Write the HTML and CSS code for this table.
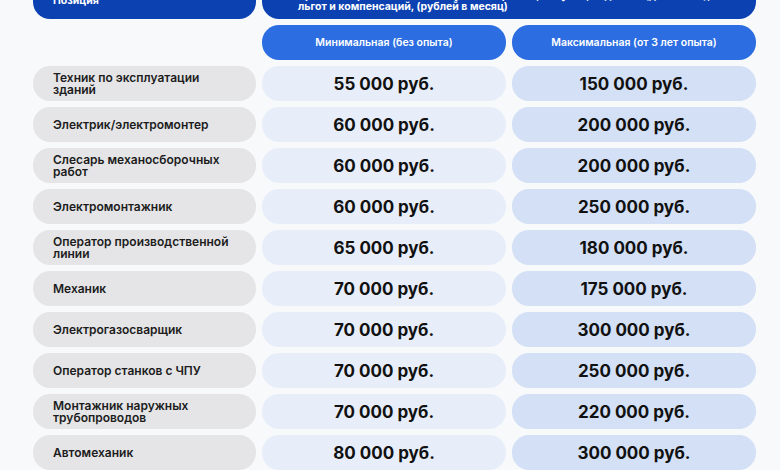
FILE: index.html
```html
<!DOCTYPE html>
<html lang="ru">
<head>
<meta charset="utf-8">
<link rel="stylesheet" href="styles.css">
</head>
<body>
<div class="table">
  <div class="head head-pos"><span>Позиция</span></div>
  <div class="head head-pay"><span>Уровень заработной платы с учетом премий, бонусов, надбавок (до вычета),<br>льгот и компенсаций, (рублей в месяц)</span></div>

  <div class="blank"></div>
  <div class="sub">Минимальная (без опыта)</div>
  <div class="sub">Максимальная (от 3 лет опыта)</div>

  <div class="pos">Техник по эксплуатации<br>зданий</div>
  <div class="min">55 000 руб.</div>
  <div class="max">150 000 руб.</div>

  <div class="pos">Электрик/электромонтер</div>
  <div class="min">60 000 руб.</div>
  <div class="max">200 000 руб.</div>

  <div class="pos">Слесарь механосборочных<br>работ</div>
  <div class="min">60 000 руб.</div>
  <div class="max">200 000 руб.</div>

  <div class="pos">Электромонтажник</div>
  <div class="min">60 000 руб.</div>
  <div class="max">250 000 руб.</div>

  <div class="pos">Оператор производственной<br>линии</div>
  <div class="min">65 000 руб.</div>
  <div class="max">180 000 руб.</div>

  <div class="pos">Механик</div>
  <div class="min">70 000 руб.</div>
  <div class="max">175 000 руб.</div>

  <div class="pos">Электрогазосварщик</div>
  <div class="min">70 000 руб.</div>
  <div class="max">300 000 руб.</div>

  <div class="pos">Оператор станков с ЧПУ</div>
  <div class="min">70 000 руб.</div>
  <div class="max">250 000 руб.</div>

  <div class="pos">Монтажник наружных<br>трубопроводов</div>
  <div class="min">70 000 руб.</div>
  <div class="max">220 000 руб.</div>

  <div class="pos">Автомеханик</div>
  <div class="min">80 000 руб.</div>
  <div class="max">300 000 руб.</div>
</div>
</body>
</html>
```

FILE: styles.css
```css
html, body {
  margin: 0;
  padding: 0;
  background: #f8f9fb;
  overflow: hidden;
  height: 470px;
}
body {
  font-family: Inter, "Open Sans", sans-serif;
  color: #151515;
}
.table {
  display: grid;
  grid-template-columns: 223px 244px 244px;
  grid-template-rows: 50px;
  grid-auto-rows: 35px;
  column-gap: 6px;
  row-gap: 6px;
  margin: -31px 0 0 33px;
}
.head {
  background: #0c41b2;
  color: #fff;
  font-weight: 700;
  font-size: 10.5px;
  line-height: 11px;
  border-radius: 0 0 17px 17px;
  display: flex;
  align-items: flex-end;
  box-sizing: border-box;
}
.head-pos {
  padding: 0 0 13px 20px;
}
.head-pay {
  grid-column: 2 / 4;
  padding: 0 30px 7px 36px;
  white-space: nowrap;
}
.sub {
  background: #2c6ee1;
  color: #fff;
  font-size: 10.5px;
  font-weight: 600;
  border-radius: 17px;
  display: flex;
  align-items: center;
  justify-content: center;
}
.pos {
  background: #e5e5e7;
  border-radius: 17px;
  padding: 0 20px;
  font-size: 12px;
  font-weight: 600;
  line-height: 11.5px;
  display: flex;
  align-items: center;
  color: #1c1c1c;
}
.min, .max {
  border-radius: 17px;
  font-size: 17px;
  font-weight: 700;
  display: flex;
  align-items: center;
  justify-content: center;
  color: #111;
}
.min { background: #e8eef9; }
.max { background: #d3e0f5; }
```
